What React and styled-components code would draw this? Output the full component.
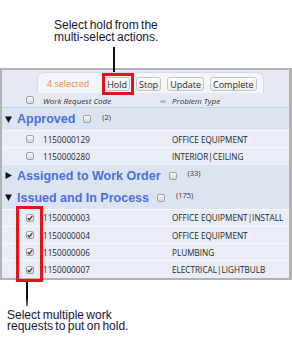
import React from 'react'
import styled, { createGlobalStyle } from 'styled-components'

const groups = [
  {
    title: 'Approved',
    count: 2,
    open: true,
    rows: [
      { code: '1150000129', problem: 'OFFICE EQUIPMENT' },
      { code: '1150000280', problem: 'INTERIOR|CEILING' },
    ],
  },
  { title: 'Assigned to Work Order', count: 33, open: false, rows: [] },
  {
    title: 'Issued and In Process',
    count: 175,
    open: true,
    picked: true,
    rows: [
      { code: '1150000003', problem: 'OFFICE EQUIPMENT|INSTALL' },
      { code: '1150000004', problem: 'OFFICE EQUIPMENT' },
      { code: '1150000006', problem: 'PLUMBING' },
      { code: '1150000007', problem: 'ELECTRICAL|LIGHTBULB' },
    ],
  },
]

const GlobalStyle = createGlobalStyle`
  html, body {
    margin: 0;
    padding: 0;
    background: #fff;
  }
  * { box-sizing: border-box; }
`

const Checkbox = ({ checked }) => (
  <StBox $checked={checked}>
    {checked && (
      <svg width="6" height="6" viewBox="0 0 6 6">
        <path d="M0.6 3.2 L2.3 4.8 L5.4 0.8" fill="none" stroke="#3a3a3a" strokeWidth="1.3" />
      </svg>
    )}
  </StBox>
)

const Arrow = ({ open }) => (
  <svg width="7" height="7" viewBox="0 0 7 7">
    {open ? <polygon points="0,0.5 7,0.5 3.5,7" fill="#111" /> : <polygon points="0.5,0 7,3.5 0.5,7" fill="#111" />}
  </svg>
)

const App = () => {
  return (
    <StPage>
      <GlobalStyle />
      <StNote>
        <div>Select hold from the</div>
        <div>multi-select actions.</div>
      </StNote>
      <StTopLine />
      <StPanel>
        <StToolbar>
          <StTab>
            <StSelected>4 selected</StSelected>
            <StAction $marked>Hold</StAction>
            <StAction>Stop</StAction>
            <StAction>Update</StAction>
            <StAction>Complete</StAction>
          </StTab>
        </StToolbar>
        <StHeadRow>
          <Checkbox />
          <StHeadCell>
            Work Request Code
            <StDash />
          </StHeadCell>
          <StHeadCell>Problem Type</StHeadCell>
        </StHeadRow>
        {groups.map((g) => (
          <div key={g.title}>
            <StGroupHead>
              <Arrow open={g.open} />
              <StGroupTitle>{g.title}</StGroupTitle>
              <Checkbox />
              <StCount>({g.count})</StCount>
            </StGroupHead>
            {g.rows.length > 0 && (
              <StRows $marked={g.picked}>
                {g.rows.map((r) => (
                  <StRow key={r.code}>
                    <Checkbox checked={g.picked} />
                    <span>{r.code}</span>
                    <span>{r.problem}</span>
                  </StRow>
                ))}
              </StRows>
            )}
          </div>
        ))}
      </StPanel>
      <StBottomLine />
      <StNote $bottom>
        <div>Select multiple work</div>
        <div>requests to put on hold.</div>
      </StNote>
    </StPage>
  )
}

export default App

const StPage = styled.div`
  width: 292px;
  height: 351px;
  overflow: hidden;
  font-family: 'Open Sans', 'Liberation Sans', sans-serif;
`
const StNote = styled.div`
  font-family: 'Liberation Sans', Arial, sans-serif;
  font-size: 12px;
  line-height: 12px;
  color: #161634;
  word-spacing: -1px;
  padding-left: ${(p) => (p.$bottom ? '7px' : '54px')};
  padding-top: ${(p) => (p.$bottom ? '3px' : '19px')};
  & > div {
    height: ${(p) => (p.$bottom ? '11.5px' : '12px')};
    overflow: visible;
    white-space: nowrap;
  }
`
const StTopLine = styled.div`
  position: relative;
  z-index: 2;
  width: 2px;
  height: 25px;
  margin: 4px 0 -4px 113px;
  background: #111;
`
const StBottomLine = styled.div`
  width: 2px;
  height: 26px;
  margin-left: 26px;
  background: linear-gradient(#111 70%, #777);
`
const StPanel = styled.div`
  width: 292px;
  border: 2px solid #b3b3b3;
  border-right-width: 3px;
  background: #e4e9f4;
`
const StToolbar = styled.div`
  padding: 2px 0 0 35px;
`
const StTab = styled.div`
  width: 227px;
  height: 21px;
  display: flex;
  align-items: center;
  gap: 6px;
  padding-left: 9px;
  background: #f2f5fa;
  border: 1px solid #d4dbe9;
  border-bottom: none;
  border-radius: 7px 7px 0 0;
`
const StSelected = styled.span`
  font-size: 9px;
  color: #ef8a3c;
  margin-right: 9px;
`
const StAction = styled.span`
  position: relative;
  height: 14px;
  display: flex;
  align-items: center;
  padding: 0 2px;
  font-size: 9px;
  color: #2b2b2b;
  background: linear-gradient(#ffffff, #ececec);
  border: 1px solid #c4c4c4;
  border-radius: 3px;
  margin-top: 2px;
  &::after {
    content: '';
    display: ${(p) => (p.$marked ? 'block' : 'none')};
    position: absolute;
    top: -5px;
    left: -3px;
    right: -5px;
    bottom: -5px;
    border: 3px solid #e6121b;
  }
`
const StBox = styled.span`
  width: 8px;
  height: 8px;
  display: inline-flex;
  align-items: center;
  justify-content: center;
  border: 1px solid #a3a3a3;
  border-radius: 2px;
  background: linear-gradient(#fafafa, #d6d6d6);
`
const StHeadRow = styled.div`
  height: 15px;
  display: grid;
  grid-template-columns: 17px 129px 1fr;
  align-items: center;
  padding-left: 24px;
  border-bottom: 1px solid #c5d1e6;
`
const StHeadCell = styled.span`
  display: flex;
  align-items: center;
  justify-content: space-between;
  padding-right: 6px;
  font-size: 8px;
  font-style: italic;
  color: #333;
`
const StDash = styled.span`
  width: 6px;
  height: 3px;
  margin-top: 3px;
  border-radius: 2px;
  background: #a8bbe0;
`
const StGroupHead = styled.div`
  height: 22px;
  display: flex;
  align-items: center;
  padding-left: 3px;
  background: #dde4f1;
`
const StGroupTitle = styled.span`
  font-family: 'Liberation Sans', Arial, sans-serif;
  font-weight: bold;
  font-size: 12.5px;
  color: #4a6fde;
  margin: 0 8px 0 5px;
`
const StCount = styled.span`
  font-size: 7.5px;
  color: #333;
  margin: 0 0 5px 11px;
`
const StRows = styled.div`
  position: relative;
  &::after {
    content: '';
    display: ${(p) => (p.$marked ? 'block' : 'none')};
    position: absolute;
    top: -3px;
    bottom: -4px;
    left: 14px;
    width: 21px;
    border: 3px solid #e6121b;
  }
`
const StRow = styled.div`
  height: 17.3px;
  display: grid;
  grid-template-columns: 17px 129px 1fr;
  align-items: center;
  padding-left: 24px;
  font-size: 8.2px;
  color: #262626;
  background: #e8edf7;
  border-top: 1px solid #f6f8fc;
`
